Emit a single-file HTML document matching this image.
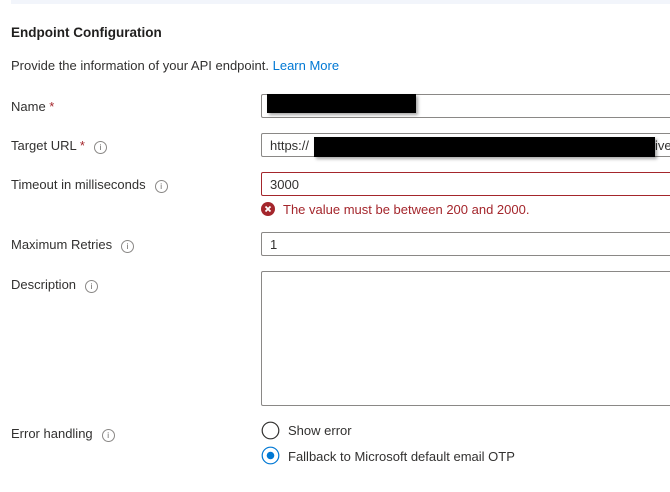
<!DOCTYPE html>
<html><head><style>
body{margin:0;width:670px;height:492px;background:#fff;font-family:"Liberation Sans",sans-serif;color:#323130;font-size:13px;position:relative;overflow:hidden}
.a{position:absolute;white-space:nowrap}
.inp{position:absolute;left:261px;width:420px;border:1px solid #8a8886;border-radius:2px;box-sizing:border-box;background:#fff}
.info{display:inline-block;width:11px;height:11px;border:1px solid #8a8886;border-radius:50%;font-size:8px;line-height:11px;text-align:center;color:#605e5c;vertical-align:0px;margin-left:9px}
.star{color:#a4262c}
.blk{position:absolute;background:#000;box-shadow:2px 2px 3px rgba(0,0,0,.35)}
</style></head><body>
<div class="a" style="left:11px;top:0;width:660px;height:4px;background:#f2f5fb"></div>
<div class="a" style="left:11px;top:25px;font-weight:bold;font-size:13.5px;color:#201f1e">Endpoint Configuration</div>
<div class="a" style="left:11px;top:58px">Provide the information of your API endpoint. <span style="color:#0078d4">Learn More</span></div>
<div class="a" style="left:11px;top:99px">Name <span class="star">*</span></div>
<div class="a" style="left:11px;top:138px">Target URL <span class="star">*</span><span class="info">i</span></div>
<div class="a" style="left:11px;top:177px">Timeout in milliseconds<span class="info">i</span></div>
<div class="a" style="left:11px;top:237px">Maximum Retries<span class="info">i</span></div>
<div class="a" style="left:11px;top:277px">Description<span class="info">i</span></div>
<div class="a" style="left:11px;top:426px">Error handling<span class="info">i</span></div>

<div class="inp" style="top:94px;height:24px"></div>
<div class="blk" style="left:267px;top:94px;width:149px;height:19px"></div>
<div class="inp" style="top:133px;height:24px"></div>
<div class="a" style="left:270px;top:138px">https://</div>
<div class="a" style="left:655px;top:138px">ive</div>
<div class="blk" style="left:314px;top:137px;width:341px;height:20px"></div>
<div class="inp" style="top:172px;height:24px;border-color:#a4262c"></div>
<div class="a" style="left:270px;top:177px">3000</div>
<svg class="a" style="left:261px;top:202px" width="14" height="14" viewBox="0 0 14 14"><circle cx="7" cy="7" r="7" fill="#a4262c"/><path d="M4.5 4.5L9.5 9.5M9.5 4.5L4.5 9.5" stroke="#fff" stroke-width="1.8"/></svg>
<div class="a" style="left:283px;top:202px;color:#a4262c">The value must be between 200 and 2000.</div>
<div class="inp" style="top:232px;height:24px"></div>
<div class="a" style="left:270px;top:237px">1</div>
<div class="inp" style="top:271px;height:135px"></div>
<svg class="a" style="left:261px;top:421px" width="20" height="20"><circle cx="9.5" cy="9.5" r="8.3" fill="#fff" stroke="#323130" stroke-width="1.2"/></svg>
<div class="a" style="left:288px;top:423px">Show error</div>
<svg class="a" style="left:261px;top:446px" width="20" height="20"><circle cx="9.5" cy="9.5" r="8.3" fill="#fff" stroke="#0078d4" stroke-width="1.2"/><circle cx="9.5" cy="9.5" r="3.8" fill="#0078d4"/></svg>
<div class="a" style="left:288px;top:449px">Fallback to Microsoft default email OTP</div>
</body></html>
